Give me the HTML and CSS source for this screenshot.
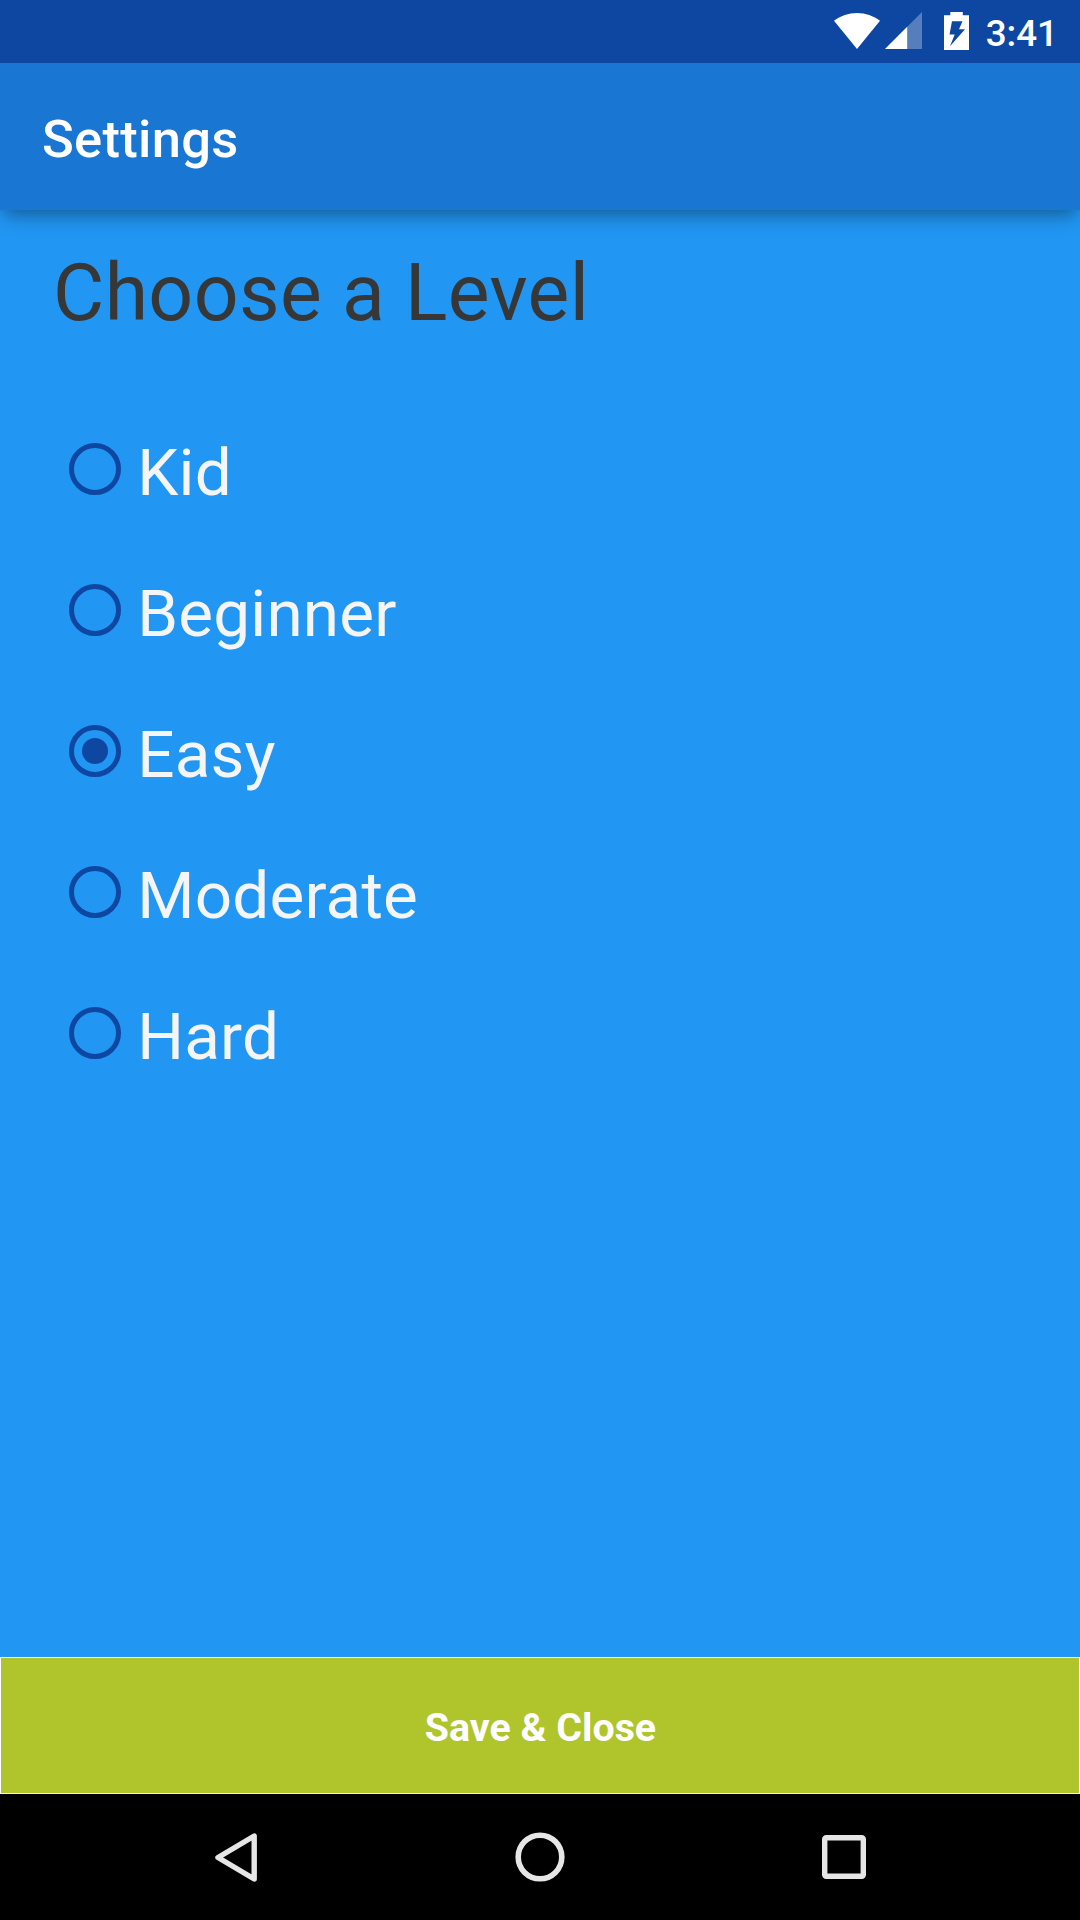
FILE: index.html
```html
<!DOCTYPE html>
<html lang="en">
<head>
<meta charset="utf-8">
<title>Settings</title>
<link rel="stylesheet" href="styles.css">
</head>
<body>
<div class="screen">
  <div class="status-bar">
    <svg class="wifi" width="46" height="37" viewBox="0 0 46 37"><path d="M23 37 0 8.700C6.500 3.700 14.500.900 23 .900s16.500 2.800 23 7.800z" fill="#fff"/></svg>
    <svg class="signal" width="37" height="37" viewBox="0 0 37 37"><path d="M37 0v37H0z" fill="#fff" opacity=".3"/><path d="M22.200 14.800V37H0z" fill="#fff"/></svg>
    <svg class="battery" width="25" height="38" viewBox="0 0 25 38"><path fill="#fff" fill-rule="evenodd" d="M6.300 0h12.500v3.200H25V38H0V3.200h6.300zM8 9.200 5.500 22.500h5.200L6 34.200 21 17.300h-6L18.500 9.200z"/></svg>
    <span class="clock">3:41</span>
  </div>
  <header class="app-bar"><h1 class="title">Settings</h1></header>
  <main class="content">
    <h2 class="heading">Choose a Level</h2>
    <div class="options" role="radiogroup">
      <div class="option"><span class="radio"></span><span class="label">Kid</span></div>
      <div class="option"><span class="radio"></span><span class="label">Beginner</span></div>
      <div class="option"><span class="radio checked"></span><span class="label">Easy</span></div>
      <div class="option"><span class="radio"></span><span class="label">Moderate</span></div>
      <div class="option"><span class="radio"></span><span class="label">Hard</span></div>
    </div>
  </main>
  <button class="save">Save &amp; Close</button>
  <nav class="nav-bar">
    <svg class="back" width="42" height="49" viewBox="0 0 42 49"><path d="M39.200 3v43L3 24.500z" fill="none" stroke="#e6e6e6" stroke-width="5.400" stroke-linejoin="round"/></svg>
    <svg class="home" width="50" height="50" viewBox="0 0 50 50"><circle cx="25" cy="25" r="21.800" fill="none" stroke="#e6e6e6" stroke-width="5.600"/></svg>
    <svg class="recents" width="44" height="44" viewBox="0 0 44 44"><rect x="2.700" y="2.700" width="38.600" height="38.600" rx="1.500" fill="none" stroke="#e6e6e6" stroke-width="5.400"/></svg>
  </nav>
</div>
</body>
</html>
```
FILE: styles.css
```css
* { box-sizing: border-box; }

body {
  margin: 0;
  font-family: Roboto, "Liberation Sans", sans-serif;
}

.screen {
  display: flex;
  flex-direction: column;
  width: 1080px;
  height: 1920px;
  overflow: hidden;
  background: #2196f3;
}

svg { display: block; flex: none; }

.status-bar {
  position: relative;
  z-index: 1;
  display: flex;
  justify-content: flex-end;
  align-items: flex-start;
  height: 63px;
  padding: 12px 22px 0 0;
  background: #0d47a1;
  color: #fff;
}

.signal { margin-left: 4.500px; }
.battery { margin-left: 22px; }

.clock {
  margin-left: 17px;
  padding-top: 1px;
  font-size: 36.750px;
  font-weight: 500;
  line-height: 42px;
}

.app-bar {
  display: flex;
  align-items: center;
  height: 147px;
  padding: 4px 42px 0;
  background: #1976d2;
  box-shadow: 0 12px 18px -5px rgba(0, 0, 0, .28), 0 2px 12px rgba(0, 0, 0, .12);
}

.title {
  margin: 0;
  color: #fff;
  font-size: 52.500px;
  font-weight: 500;
  letter-spacing: .3px;
  line-height: 62px;
}

.content {
  flex: 1;
  padding: 37px 53px 0;
}

.heading {
  margin: 0;
  color: #373737;
  font-size: 78.750px;
  font-weight: 400;
  letter-spacing: .37px;
  line-height: 92px;
}

.options { padding: 59.500px 0 0 15.750px; }

.option {
  display: flex;
  align-items: center;
  gap: 16px;
  height: 141px;
}

.radio {
  display: flex;
  align-items: center;
  justify-content: center;
  width: 52.500px;
  height: 52.500px;
  border: 5.250px solid #0d47a1;
  border-radius: 50%;
}

.checked::after {
  content: "";
  width: 26.250px;
  height: 26.250px;
  border-radius: 50%;
  background: #0d47a1;
}

.label {
  padding-top: 7px;
  color: #f5f5f5;
  font-size: 65.625px;
  letter-spacing: .17px;
  line-height: 78px;
}

.save {
  height: 137px;
  padding: 4px 0 0 1px;
  border: 1px solid #fff;
  background: #afc52b;
  color: #fff;
  font: 700 39.375px/46px Roboto, "Liberation Sans", sans-serif;
}

.nav-bar {
  display: flex;
  align-items: center;
  height: 126px;
  padding-left: 215px;
  background: #000;
}

.home { margin-left: 258px; }
.recents { margin-left: 257px; }
```
